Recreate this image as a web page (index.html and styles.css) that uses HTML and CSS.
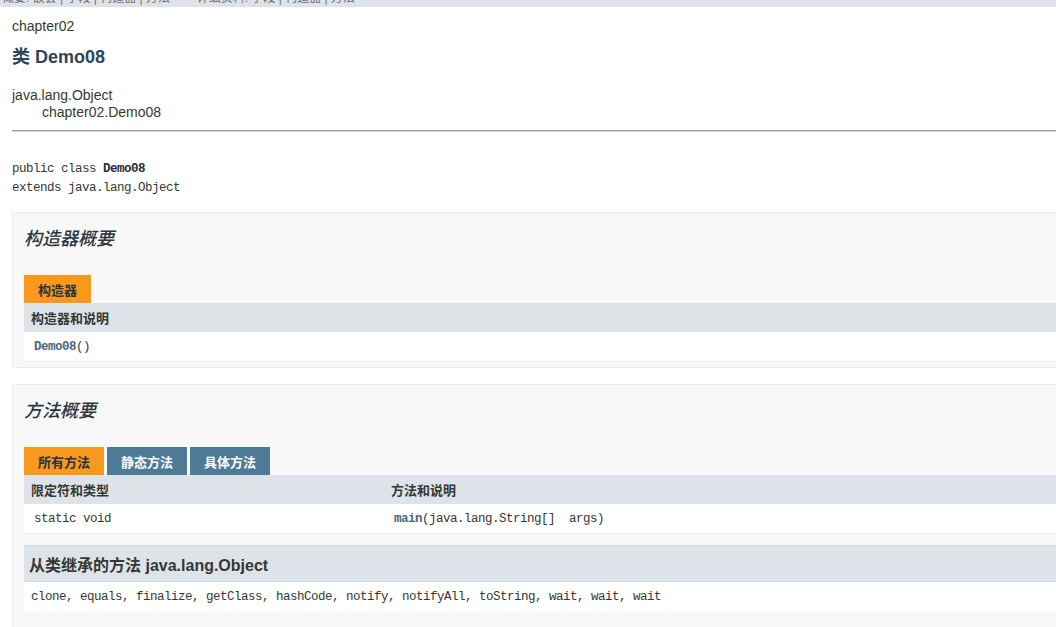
FILE: index.html
```html
<!DOCTYPE html>
<html lang="zh-CN">
<head>
<meta charset="utf-8">
<title>Demo08</title>
<link rel="stylesheet" href="styles.css">
</head>
<body>
<div class="subnav"><div class="subnav-text">概要:&nbsp;嵌套&nbsp;|&nbsp;字段&nbsp;|&nbsp;构造器&nbsp;|&nbsp;方法&nbsp;&nbsp;&nbsp;&nbsp;&nbsp;&nbsp;&nbsp;&nbsp;详细资料:&nbsp;字段&nbsp;|&nbsp;构造器&nbsp;|&nbsp;方法</div></div>
<div class="page">
  <div class="header">
    <div class="subtitle">chapter02</div>
    <h2 class="title">类 Demo08</h2>
  </div>
  <div class="inheritance">
    <div>java.lang.Object</div>
    <div class="inh-child">chapter02.Demo08</div>
  </div>
  <div class="rule"></div>
  <pre class="decl">public class <b>Demo08</b>
extends java.lang.Object</pre>

  <div class="block">
    <h3 class="block-title">构造器概要</h3>
    <div class="tabs"><span class="tab active">构造器</span></div>
    <div class="thead"><div class="th">构造器和说明</div></div>
    <div class="trow"><div class="td code"><span class="link">Demo08</span>()</div></div>
  </div>

  <div class="block block-last">
    <h3 class="block-title">方法概要</h3>
    <div class="tabs">
      <span class="tab active">所有方法</span>
      <span class="tab">静态方法</span>
      <span class="tab">具体方法</span>
    </div>
    <div class="thead grid2"><div class="th">限定符和类型</div><div class="th">方法和说明</div></div>
    <div class="trow grid2"><div class="td code">static void</div><div class="td code"><span class="link">main</span>(java.lang.String[]&nbsp; args)</div></div>
    <div class="inherit-head">从类继承的方法 java.lang.Object</div>
    <div class="inherit-row code">clone, equals, finalize, getClass, hashCode, notify, notifyAll, toString, wait, wait, wait</div>
  </div>
</div>
</body>
</html>
```

FILE: styles.css
```css
html, body {
  margin: 0;
  padding: 0;
  background: #ffffff;
  overflow: hidden;
}
body {
  font-family: "Liberation Sans", Arial, "Noto Sans CJK SC", sans-serif;
  font-size: 14px;
  color: #353833;
}
.subnav {
  height: 7px;
  background: #dee3e9;
  overflow: hidden;
}
.subnav-text {
  font-size: 12px;
  line-height: 12px;
  margin-top: -8px;
  padding-left: 2px;
  color: #6b6f73;
  white-space: nowrap;
}
.page {
  padding-left: 12px;
}
.header {
  padding-top: 10px;
}
.subtitle {
  line-height: 18px;
  font-size: 14px;
}
.title {
  margin: 10px 0 0 0;
  font-size: 18px;
  line-height: 24px;
  font-weight: bold;
  color: #2c4557;
}
.inheritance {
  margin-top: 18px;
  line-height: 17px;
}
.inh-child {
  padding-left: 30px;
}
.rule {
  margin-top: 9px;
  margin-right: -20px;
  height: 1px;
  background: #a0a0a0;
  border-bottom: 1px solid #d6d6d6;
}
.code, .decl {
  font-family: "Liberation Mono", "Courier New", "Noto Sans CJK SC", monospace;
  font-size: 12.5px;
  letter-spacing: -0.5px;
}
.decl {
  margin: 28px 0 0 0;
  line-height: 19px;
  color: #353833;
}
.decl b {
  font-weight: bold;
  color: #2c2a3a;
}
.block {
  margin-top: 14px;
  margin-right: -20px;
  background: #f8f8f8;
  border: 1px solid #ededed;
  padding: 0 0 5px 11px;
}
.block + .block {
  margin-top: 16px;
}
.block-last {
  padding-bottom: 40px;
}
.block-title {
  margin: 14px 0 24px 0;
  font-size: 18px;
  line-height: 24px;
  font-style: italic;
  font-weight: 500;
  color: #2c3540;
}
.tabs {
  display: flex;
  gap: 3px;
  height: 28px;
}
.tab {
  display: flex;
  align-items: center;
  padding: 0 14px 0 14px;
  background: #4d7a97;
  color: #ffffff;
  font-weight: bold;
  font-size: 13px;
}
.tab.active {
  background: #f8981d;
  color: #253441;
}
.thead {
  height: 29px;
  background: #dee3e9;
  display: flex;
  align-items: center;
}
.th {
  padding-left: 7px;
  font-size: 13px;
  font-weight: bold;
  color: #353833;
}
.trow {
  height: 29px;
  background: #ffffff;
  border-bottom: 1px solid #eeeeee;
  display: flex;
  align-items: center;
}
.td {
  padding-left: 10px;
}
.grid2 {
  display: grid;
  grid-template-columns: 360px 1fr;
  align-items: center;
}
.link {
  color: #4a6782;
  font-weight: bold;
}
.inherit-head {
  margin-top: 11px;
  height: 35px;
  display: flex;
  align-items: center;
  padding-left: 5px;
  background: #dee3e9;
  border-top: 1px solid #d0d9e0;
  border-bottom: 1px solid #d0d9e0;
  font-size: 16px;
  font-weight: bold;
  color: #353833;
}
.inherit-row {
  height: 30px;
  display: flex;
  align-items: center;
  padding-left: 7px;
  background: #ffffff;
}
```
